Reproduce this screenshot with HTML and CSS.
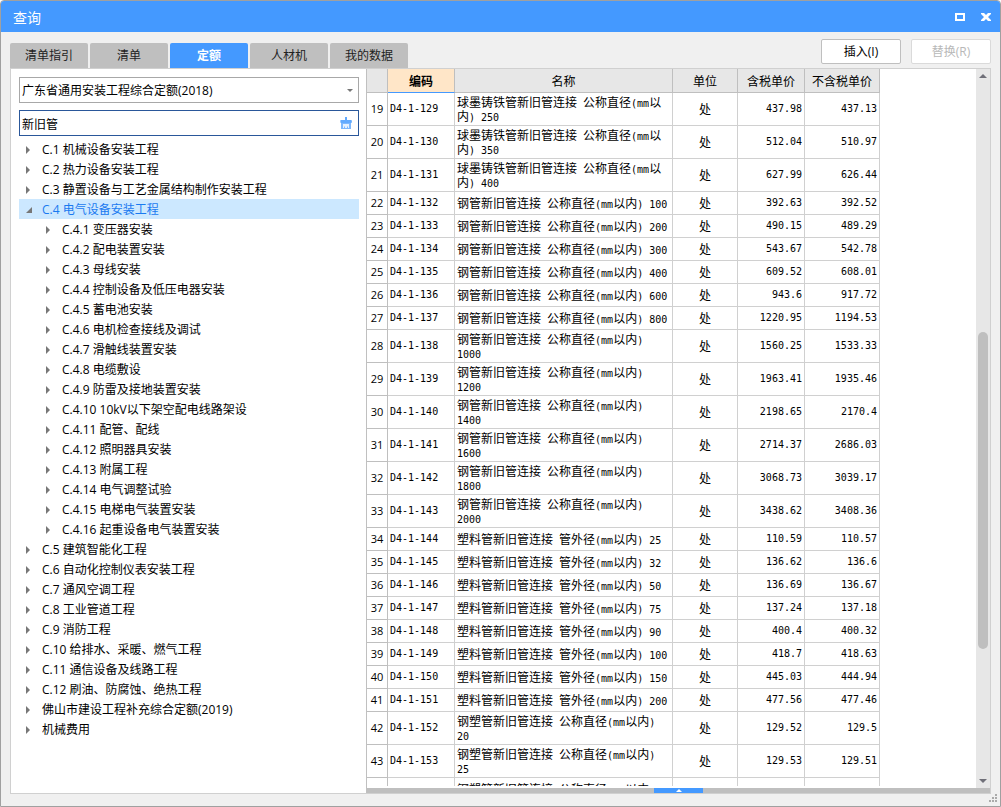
FILE: index.html
```html
<!DOCTYPE html>
<html lang="zh-CN">
<head>
<meta charset="utf-8">
<title>查询</title>
<link rel="stylesheet" href="styles.css">
</head>
<body>
<div class="window">
  <header class="titlebar">
    <h1 class="title">查询</h1>
    <button class="win-btn" type="button" aria-label="最大化"><svg width="10" height="8" viewBox="0 0 10 8"><path d="M0 0h10v8H0zM2 2v4h6V2z" fill="#fff" fill-rule="evenodd"/></svg></button>
    <button class="win-btn" type="button" aria-label="关闭"><svg width="10" height="8" viewBox="0 0 10 8"><path d="M0 0h3l2 2 2-2h3v1L7 4l3 3v1H7L5 6 3 8H0V7l3-3-3-3z" fill="#fff"/></svg></button>
  </header>
  <div class="toolbar">
    <nav class="tabs">
      <button class="tab" type="button">清单指引</button>
      <button class="tab" type="button">清单</button>
      <button class="tab active" type="button">定额</button>
      <button class="tab" type="button">人材机</button>
      <button class="tab" type="button">我的数据</button>
    </nav>
    <div class="actions">
      <button class="action" type="button">插入(I)</button>
      <button class="action" type="button" disabled>替换(R)</button>
    </div>
  </div>
  <main class="panel">
    <aside class="side">
      <div class="field">
        <select class="combo" aria-label="定额库"><option>广东省通用安装工程综合定额(2018)</option></select>
        <svg class="field-arrow" width="6" height="3" viewBox="0 0 6 3"><path d="M0 0h6L3 3z" fill="#777"/></svg>
      </div>
      <div class="field">
        <input class="search" type="text" value="新旧管" aria-label="搜索">
        <button class="clear" type="button" aria-label="清除"><svg width="12" height="12" viewBox="0 0 12 12"><path d="M5 0h2v3h4.500q1 3-.5 3H1Q0 6 .5 3H5z" fill="#62aaff"/><path d="M1 6h10v6H1z" fill="#7db8ff"/><path d="M3 7h6v4H8V9.500H7V11H5V9.500H4V11H3z" fill="#e4f0ff"/></svg></button>
      </div>
      <ul class="tree">
        <li class="node">C.1 机械设备安装工程</li>
        <li class="node">C.2 热力设备安装工程</li>
        <li class="node">C.3 静置设备与工艺金属结构制作安装工程</li>
        <li class="node open">C.4 电气设备安装工程</li>
        <li>
          <ul class="subtree">
            <li class="node">C.4.1 变压器安装</li>
            <li class="node">C.4.2 配电装置安装</li>
            <li class="node">C.4.3 母线安装</li>
            <li class="node">C.4.4 控制设备及低压电器安装</li>
            <li class="node">C.4.5 蓄电池安装</li>
            <li class="node">C.4.6 电机检查接线及调试</li>
            <li class="node">C.4.7 滑触线装置安装</li>
            <li class="node">C.4.8 电缆敷设</li>
            <li class="node">C.4.9 防雷及接地装置安装</li>
            <li class="node">C.4.10 10kV以下架空配电线路架设</li>
            <li class="node">C.4.11 配管、配线</li>
            <li class="node">C.4.12 照明器具安装</li>
            <li class="node">C.4.13 附属工程</li>
            <li class="node">C.4.14 电气调整试验</li>
            <li class="node">C.4.15 电梯电气装置安装</li>
            <li class="node">C.4.16 起重设备电气装置安装</li>
          </ul>
        </li>
        <li class="node">C.5 建筑智能化工程</li>
        <li class="node">C.6 自动化控制仪表安装工程</li>
        <li class="node">C.7 通风空调工程</li>
        <li class="node">C.8 工业管道工程</li>
        <li class="node">C.9 消防工程</li>
        <li class="node">C.10 给排水、采暖、燃气工程</li>
        <li class="node">C.11 通信设备及线路工程</li>
        <li class="node">C.12 刷油、防腐蚀、绝热工程</li>
        <li class="node">佛山市建设工程补充综合定额(2019)</li>
        <li class="node">机械费用</li>
      </ul>
    </aside>
    <section class="content">
      <div class="view">
        <div class="grid-clip">
          <table class="grid">
            <colgroup><col class="c-num"><col class="c-code"><col class="c-name"><col class="c-unit"><col class="c-tax"><col class="c-net"></colgroup>
            <thead><tr><th></th><th class="sorted">编码</th><th>名称</th><th>单位</th><th>含税单价</th><th>不含税单价</th></tr></thead>
            <tbody>
              <tr><th>19</th><td>D4-1-129</td><td>球墨铸铁管新旧管连接<span> </span>公称直径<span>(mm</span>以内<span>) 250</span></td><td>处</td><td>437.98</td><td>437.13</td></tr>
              <tr><th>20</th><td>D4-1-130</td><td>球墨铸铁管新旧管连接<span> </span>公称直径<span>(mm</span>以内<span>) 350</span></td><td>处</td><td>512.04</td><td>510.97</td></tr>
              <tr><th>21</th><td>D4-1-131</td><td>球墨铸铁管新旧管连接<span> </span>公称直径<span>(mm</span>以内<span>) 400</span></td><td>处</td><td>627.99</td><td>626.44</td></tr>
              <tr><th>22</th><td>D4-1-132</td><td>钢管新旧管连接<span> </span>公称直径<span>(mm</span>以内<span>) 100</span></td><td>处</td><td>392.63</td><td>392.52</td></tr>
              <tr><th>23</th><td>D4-1-133</td><td>钢管新旧管连接<span> </span>公称直径<span>(mm</span>以内<span>) 200</span></td><td>处</td><td>490.15</td><td>489.29</td></tr>
              <tr><th>24</th><td>D4-1-134</td><td>钢管新旧管连接<span> </span>公称直径<span>(mm</span>以内<span>) 300</span></td><td>处</td><td>543.67</td><td>542.78</td></tr>
              <tr><th>25</th><td>D4-1-135</td><td>钢管新旧管连接<span> </span>公称直径<span>(mm</span>以内<span>) 400</span></td><td>处</td><td>609.52</td><td>608.01</td></tr>
              <tr><th>26</th><td>D4-1-136</td><td>钢管新旧管连接<span> </span>公称直径<span>(mm</span>以内<span>) 600</span></td><td>处</td><td>943.6</td><td>917.72</td></tr>
              <tr><th>27</th><td>D4-1-137</td><td>钢管新旧管连接<span> </span>公称直径<span>(mm</span>以内<span>) 800</span></td><td>处</td><td>1220.95</td><td>1194.53</td></tr>
              <tr><th>28</th><td>D4-1-138</td><td>钢管新旧管连接<span> </span>公称直径<span>(mm</span>以内<span>) 1000</span></td><td>处</td><td>1560.25</td><td>1533.33</td></tr>
              <tr><th>29</th><td>D4-1-139</td><td>钢管新旧管连接<span> </span>公称直径<span>(mm</span>以内<span>) 1200</span></td><td>处</td><td>1963.41</td><td>1935.46</td></tr>
              <tr><th>30</th><td>D4-1-140</td><td>钢管新旧管连接<span> </span>公称直径<span>(mm</span>以内<span>) 1400</span></td><td>处</td><td>2198.65</td><td>2170.4</td></tr>
              <tr><th>31</th><td>D4-1-141</td><td>钢管新旧管连接<span> </span>公称直径<span>(mm</span>以内<span>) 1600</span></td><td>处</td><td>2714.37</td><td>2686.03</td></tr>
              <tr><th>32</th><td>D4-1-142</td><td>钢管新旧管连接<span> </span>公称直径<span>(mm</span>以内<span>) 1800</span></td><td>处</td><td>3068.73</td><td>3039.17</td></tr>
              <tr><th>33</th><td>D4-1-143</td><td>钢管新旧管连接<span> </span>公称直径<span>(mm</span>以内<span>) 2000</span></td><td>处</td><td>3438.62</td><td>3408.36</td></tr>
              <tr><th>34</th><td>D4-1-144</td><td>塑料管新旧管连接<span> </span>管外径<span>(mm</span>以内<span>) 25</span></td><td>处</td><td>110.59</td><td>110.57</td></tr>
              <tr><th>35</th><td>D4-1-145</td><td>塑料管新旧管连接<span> </span>管外径<span>(mm</span>以内<span>) 32</span></td><td>处</td><td>136.62</td><td>136.6</td></tr>
              <tr><th>36</th><td>D4-1-146</td><td>塑料管新旧管连接<span> </span>管外径<span>(mm</span>以内<span>) 50</span></td><td>处</td><td>136.69</td><td>136.67</td></tr>
              <tr><th>37</th><td>D4-1-147</td><td>塑料管新旧管连接<span> </span>管外径<span>(mm</span>以内<span>) 75</span></td><td>处</td><td>137.24</td><td>137.18</td></tr>
              <tr><th>38</th><td>D4-1-148</td><td>塑料管新旧管连接<span> </span>管外径<span>(mm</span>以内<span>) 90</span></td><td>处</td><td>400.4</td><td>400.32</td></tr>
              <tr><th>39</th><td>D4-1-149</td><td>塑料管新旧管连接<span> </span>管外径<span>(mm</span>以内<span>) 100</span></td><td>处</td><td>418.7</td><td>418.63</td></tr>
              <tr><th>40</th><td>D4-1-150</td><td>塑料管新旧管连接<span> </span>管外径<span>(mm</span>以内<span>) 150</span></td><td>处</td><td>445.03</td><td>444.94</td></tr>
              <tr><th>41</th><td>D4-1-151</td><td>塑料管新旧管连接<span> </span>管外径<span>(mm</span>以内<span>) 200</span></td><td>处</td><td>477.56</td><td>477.46</td></tr>
              <tr><th>42</th><td>D4-1-152</td><td>钢塑管新旧管连接<span> </span>公称直径<span>(mm</span>以内<span>) 20</span></td><td>处</td><td>129.52</td><td>129.5</td></tr>
              <tr><th>43</th><td>D4-1-153</td><td>钢塑管新旧管连接<span> </span>公称直径<span>(mm</span>以内<span>) 25</span></td><td>处</td><td>129.53</td><td>129.51</td></tr>
              <tr><th></th><td></td><td>钢塑管新旧管连接<span> </span>公称直径<span>(mm</span>以内<span>)</span></td><td></td><td></td><td></td></tr>
            </tbody>
          </table>
        </div>
        <div class="scrollbar">
          <svg width="8" height="4" viewBox="0 0 8 4"><path d="M4 0l4 4H0z" fill="#6f6f78"/></svg>
          <div class="track"><div class="before"></div><div class="thumb"></div><div class="after"></div></div>
          <svg width="8" height="4" viewBox="0 0 8 4"><path d="M0 0h8L4 4z" fill="#6f6f78"/></svg>
        </div>
      </div>
      <div class="splitter"><button class="expand" type="button" aria-label="展开"><svg width="6" height="3" viewBox="0 0 6 3"><path d="M3 0l3 3H0z" fill="#fff"/></svg></button></div>
    </section>
  </main>
  <footer class="status"><svg width="8" height="8" viewBox="0 0 8 8" fill="#aaa"><path d="M6 0h2v2H6zM3 3h2v2H3zM6 3h2v2H6zM0 6h2v2H0zM3 6h2v2H3zM6 6h2v2H6z"/></svg></footer>
</div>
</body>
</html>
```

FILE: styles.css
```css
* { box-sizing: border-box; }

body {
  margin: 0;
  background: #fff;
  font: 12px/20px "Open Sans", "Noto Sans CJK SC", sans-serif;
  color: #000;
}

button, input, select { font: inherit; color: inherit; margin: 0; }
button { border: 0; padding: 0; background: none; }
svg { display: block; }

.window {
  display: flex;
  flex-direction: column;
  height: 100vh;
  border: 1px solid #a0a0a0;
  border-radius: 4px 4px 0 0;
  background: #f0f0f0;
  overflow: hidden;
}

.titlebar {
  display: flex;
  align-items: center;
  gap: 16px;
  height: 31px;
  padding: 0 9px 0 12px;
  background: #4499ff;
  color: #fff;
}
.title { flex: 1; margin: 0; padding-top: 2px; font-size: 14px; font-weight: 400; }
.win-btn { padding: 0; }

.toolbar {
  display: flex;
  justify-content: space-between;
  align-items: flex-end;
  height: 36px;
  padding: 0 9px;
}
.tabs { display: flex; gap: 2px; }
.tab {
  width: 78px;
  height: 25px;
  border-radius: 2px 2px 0 0;
  background: #bfbfbf;
  color: #222;
}
.tab.active { background: #4499ff; color: #fff; font-weight: 700; }
.actions { display: flex; gap: 10px; padding-bottom: 4px; }
.action {
  width: 80px;
  height: 25px;
  border: 1px solid #bfbfbf;
  border-radius: 2px;
  background: #fff;
}
.action:disabled { border-color: #dadada; color: #b8b8b8; }

.panel {
  display: flex;
  flex: 1;
  min-height: 0;
  margin: 0 9px;
  border: 1px solid #d0d0d0;
  background: #fff;
}

.side {
  display: flex;
  flex-direction: column;
  gap: 7px;
  width: 355px;
  padding: 8px 7px 0 8px;
  overflow: hidden;
}
.field { position: relative; }
.combo, .search {
  display: block;
  appearance: none;
  width: 100%;
  height: 26px;
  border: 1px solid #a8a8a8;
  border-radius: 0;
  background: #fff;
  padding: 2px 20px 0 2px;
  outline: 0;
}
.search { border-color: #2a579a; }
.field-arrow { position: absolute; right: 6px; top: 12px; }
.clear { position: absolute; right: 7px; top: 7px; }

.tree, .subtree { margin: 0; padding: 0; list-style: none; }
.tree { margin-top: -4px; }
.node {
  display: flex;
  align-items: center;
  gap: 10px;
  height: 20px;
  padding-top: 2px;
  padding-left: 7px;
  white-space: nowrap;
}
.node::before {
  content: "";
  width: 6px;
  height: 8px;
  background: #777;
  clip-path: polygon(0 0, 67% 50%, 0 100%);
}
.node.open { background: #cce8ff; color: #1a7af0; }
.node.open::before { height: 6px; clip-path: polygon(100% 0, 100% 100%, 0 100%); }
.subtree .node { padding-left: 27px; }

.content {
  display: flex;
  flex: 1;
  flex-direction: column;
  min-width: 0;
  border-left: 1px solid #c0c0c0;
}
.view { display: flex; flex: 1; min-height: 0; }
.grid-clip { flex: 1; min-width: 0; overflow: hidden; margin-bottom: 2px; }

.grid {
  width: 513px;
  table-layout: fixed;
  border-collapse: separate;
  border-spacing: 0;
  font: 12px/14px "Noto Sans CJK SC", sans-serif;
}
.c-num { width: 21px; }
.c-code { width: 67px; }
.c-name { width: 218px; }
.c-unit { width: 65px; }
.c-tax { width: 67px; }
.c-net { width: 75px; }
.grid th, .grid td {
  height: 23px;
  padding: 2px;
  border-right: 1px solid #d0d0d0;
  border-bottom: 1px solid #d0d0d0;
  text-align: left;
  font-weight: 400;
}
.grid thead th {
  height: 24px;
  border-color: #bfbfbf;
  background: #e7e7e7;
  text-align: center;
}
.grid thead .sorted {
  border-bottom-color: #4499ff;
  background: #ffe6c8;
  font-weight: 700;
}
.grid tbody th {
  border-color: #bfbfbf;
  padding: 2px 0;
  font: 11px/14px "Open Sans", sans-serif;
  text-align: center;
}
.grid td:nth-child(4) { text-align: center; }
.grid td:nth-child(2), .grid td:nth-child(5), .grid td:nth-child(6), .grid span {
  font-family: "DejaVu Sans Mono", monospace;
  font-size: 10px;
}
.grid span { line-height: 1; }
.grid td:nth-child(5), .grid td:nth-child(6) { text-align: right; }

.scrollbar {
  display: flex;
  flex-direction: column;
  align-items: center;
  width: 14px;
  padding: 5px 0;
  background: #e7e7e7;
}
.track { display: flex; flex: 1; flex-direction: column; width: 10px; }
.before { flex: 254; }
.thumb { flex: 317; border-radius: 5px; background: #bfbfbf; }
.after { flex: 130; }

.splitter { display: flex; justify-content: center; height: 5px; background: #bfbfbf; }
.expand {
  display: flex;
  align-items: center;
  justify-content: center;
  width: 49px;
  background: #4499ff;
}

.status {
  display: flex;
  justify-content: flex-end;
  height: 12px;
  padding: 0 3px;
}
```
